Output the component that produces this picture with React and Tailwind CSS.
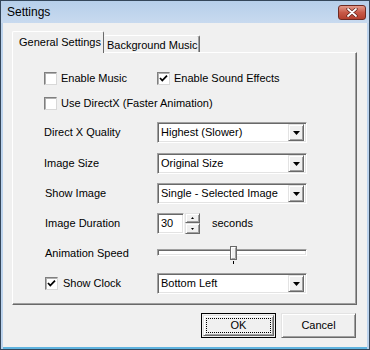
import React from "react";

const raised =
  "border border-t-[#e3e3e3] border-l-[#e3e3e3] border-r-[#696969] border-b-[#696969] shadow-[inset_1px_1px_0_#ffffff,inset_-1px_-1px_0_#a0a0a0] bg-[#f0f0f0]";
const sunken =
  "border border-t-[#a0a0a0] border-l-[#a0a0a0] border-r-white border-b-white shadow-[inset_1px_1px_0_#696969,inset_-1px_-1px_0_#e3e3e3] bg-white";

const Check = ({ checked }) => (
  <span className="w-[13px] h-[13px] shrink-0 bg-white border border-t-[#7f7f7f] border-l-[#7f7f7f] border-r-[#d8d8d8] border-b-[#d8d8d8] shadow-[inset_1px_1px_0_#b0b0b0] flex items-center justify-center">
    {checked && (
      <svg width="9" height="9" viewBox="0 0 9 9">
        <path d="M1 4 L3.3 6.5 L8 1.6" stroke="#000" strokeWidth="1.8" fill="none" />
      </svg>
    )}
  </span>
);

const Select = ({ value }) => (
  <div className={`w-[150px] h-[21px] flex items-center pl-[3px] pr-[2px] ${sunken}`}>
    <span className="flex-1 truncate">{value}</span>
    <span className={`w-[16px] h-[17px] flex items-center justify-center ${raised}`}>
      <svg width="7" height="4" viewBox="0 0 7 4">
        <path d="M0 0 H7 L3.5 4 Z" fill="#000" />
      </svg>
    </span>
  </div>
);

const Label = ({ children, className = "" }) => (
  <span className={`w-[113px] shrink-0 ${className}`}>{children}</span>
);

export default function App() {
  return (
    <div className="w-[370px] h-[350px] border border-[#34465a] bg-[#bcd3ed] flex flex-col font-['Liberation_Sans',Arial,sans-serif] text-[11px] text-black">
      <div className="h-[22px] shrink-0 flex items-center justify-between pl-[6px] pr-[3px] bg-gradient-to-b from-[#b6cfea] to-[#c8daef]">
        <span className="text-[12px]">Settings</span>
        <span className="w-[28px] h-[15px] rounded-[3px] border border-[#6e2a22] bg-gradient-to-b from-[#e39a8c] via-[#c85a48] to-[#b4402e] flex items-center justify-center">
          <svg width="12" height="9" viewBox="0 0 12 9">
            <path d="M2 1 L10 8 M10 1 L2 8" stroke="#5a1e16" strokeWidth="3.2" strokeLinecap="round" />
            <path d="M2 1 L10 8 M10 1 L2 8" stroke="#ffffff" strokeWidth="1.8" strokeLinecap="round" />
          </svg>
        </span>
      </div>

      <div className="flex-1 mx-[2px] mb-[2px] bg-[#f0f0f0] flex flex-col shadow-[0_2px_0_#5fb3df]">
        <div className="flex items-end ml-[9px] mt-[8px] h-[21px]">
          <div className="relative z-10 h-[22px] w-[92px] -mb-[1px] pl-[6px] pt-[2px] bg-[#f0f0f0] border-t border-l border-t-white border-l-white border-r border-r-[#696969] rounded-t-[2px]">
            General Settings
          </div>
          <div className="h-[17px] w-[96px] pl-[3px] pt-[1px] border-t border-t-white border-r border-r-[#696969] shadow-[inset_-1px_0_0_#a0a0a0] rounded-t-[2px]">
            Background Music
          </div>
        </div>

        <div className="ml-[9px] w-[345px] h-[253px] border border-t-white border-l-white border-r-[#696969] border-b-[#696969] shadow-[inset_-1px_-1px_0_#a0a0a0] flex flex-col pl-[31px]">
          <div className="mt-[19px] h-[13px] flex items-center">
            <div className="w-[113px] flex items-center gap-[4px]">
              <Check />
              <span>Enable Music</span>
            </div>
            <div className="flex items-center gap-[4px]">
              <Check checked />
              <span>Enable Sound Effects</span>
            </div>
          </div>

          <div className="mt-[12px] h-[13px] flex items-center gap-[4px]">
            <Check />
            <span>Use DirectX (Faster Animation)</span>
          </div>

          <div className="mt-[12px] h-[21px] flex items-center">
            <Label>Direct X Quality</Label>
            <Select value="Highest (Slower)" />
          </div>

          <div className="mt-[10px] h-[21px] flex items-center">
            <Label>Image Size</Label>
            <Select value="Original Size" />
          </div>

          <div className="mt-[9px] h-[21px] flex items-center">
            <Label className="pl-[1px]">Show Image</Label>
            <Select value="Single - Selected Image" />
          </div>

          <div className="mt-[9px] h-[21px] flex items-center">
            <Label className="pl-[1px] w-[111px]">Image Duration</Label>
            <div className={`w-[27px] h-[21px] pl-[3px] flex items-center ${sunken}`}>30</div>
            <div className="flex flex-col ml-[1px]">
              <span className={`w-[15px] h-[10px] flex items-center justify-center ${raised}`}>
                <svg width="3" height="2" viewBox="0 0 3 2">
                  <path d="M0 2 H3 L1.5 0 Z" fill="#000" />
                </svg>
              </span>
              <span className={`w-[15px] h-[11px] flex items-center justify-center ${raised}`}>
                <svg width="3" height="2" viewBox="0 0 3 2">
                  <path d="M0 0 H3 L1.5 2 Z" fill="#000" />
                </svg>
              </span>
            </div>
            <span className="ml-[12px]">seconds</span>
          </div>

          <div className="mt-[9px] h-[21px] flex items-center">
            <Label className="pl-[1px]">Animation Speed</Label>
            <div className="relative w-[150px] h-[21px]">
              <div className="absolute left-0 right-0 top-[6px] h-[7px] bg-white border border-t-[#a0a0a0] border-l-[#a0a0a0] border-r-white border-b-white shadow-[inset_1px_1px_0_#696969,inset_-1px_-1px_0_#e3e3e3]" />
              <svg className="absolute left-[73px] top-[3px]" width="8" height="18" viewBox="0 0 8 18">
                <rect x="0.5" y="0.5" width="6" height="13" fill="#f0f0f0" stroke="#696969" />
                <path d="M1.5 12.5 V1.5 H5.5" stroke="#ffffff" fill="none" />
                <path d="M5.5 1.5 V12.5 H1.5" stroke="#a0a0a0" fill="none" />
                <path d="M3.5 15 V18" stroke="#000" />
              </svg>
            </div>
          </div>

          <div className="mt-[9px] h-[21px] flex items-center">
            <div className="w-[113px] flex items-center gap-[5px] pl-[1px]">
              <Check checked />
              <span>Show Clock</span>
            </div>
            <Select value="Bottom Left" />
          </div>
        </div>

        <div className="flex justify-end gap-[5px] mt-[8px] mr-[11px]">
          <button className="w-[75px] h-[25px] border border-black p-[1px] bg-[#f0f0f0]">
            <div className={`w-full h-full p-[2px] ${raised}`}>
              <div className="w-full h-full border border-dotted border-black flex items-center justify-center">
                OK
              </div>
            </div>
          </button>
          <button className={`w-[75px] h-[25px] flex items-center justify-center ${raised}`}>
            Cancel
          </button>
        </div>
      </div>
    </div>
  );
}
